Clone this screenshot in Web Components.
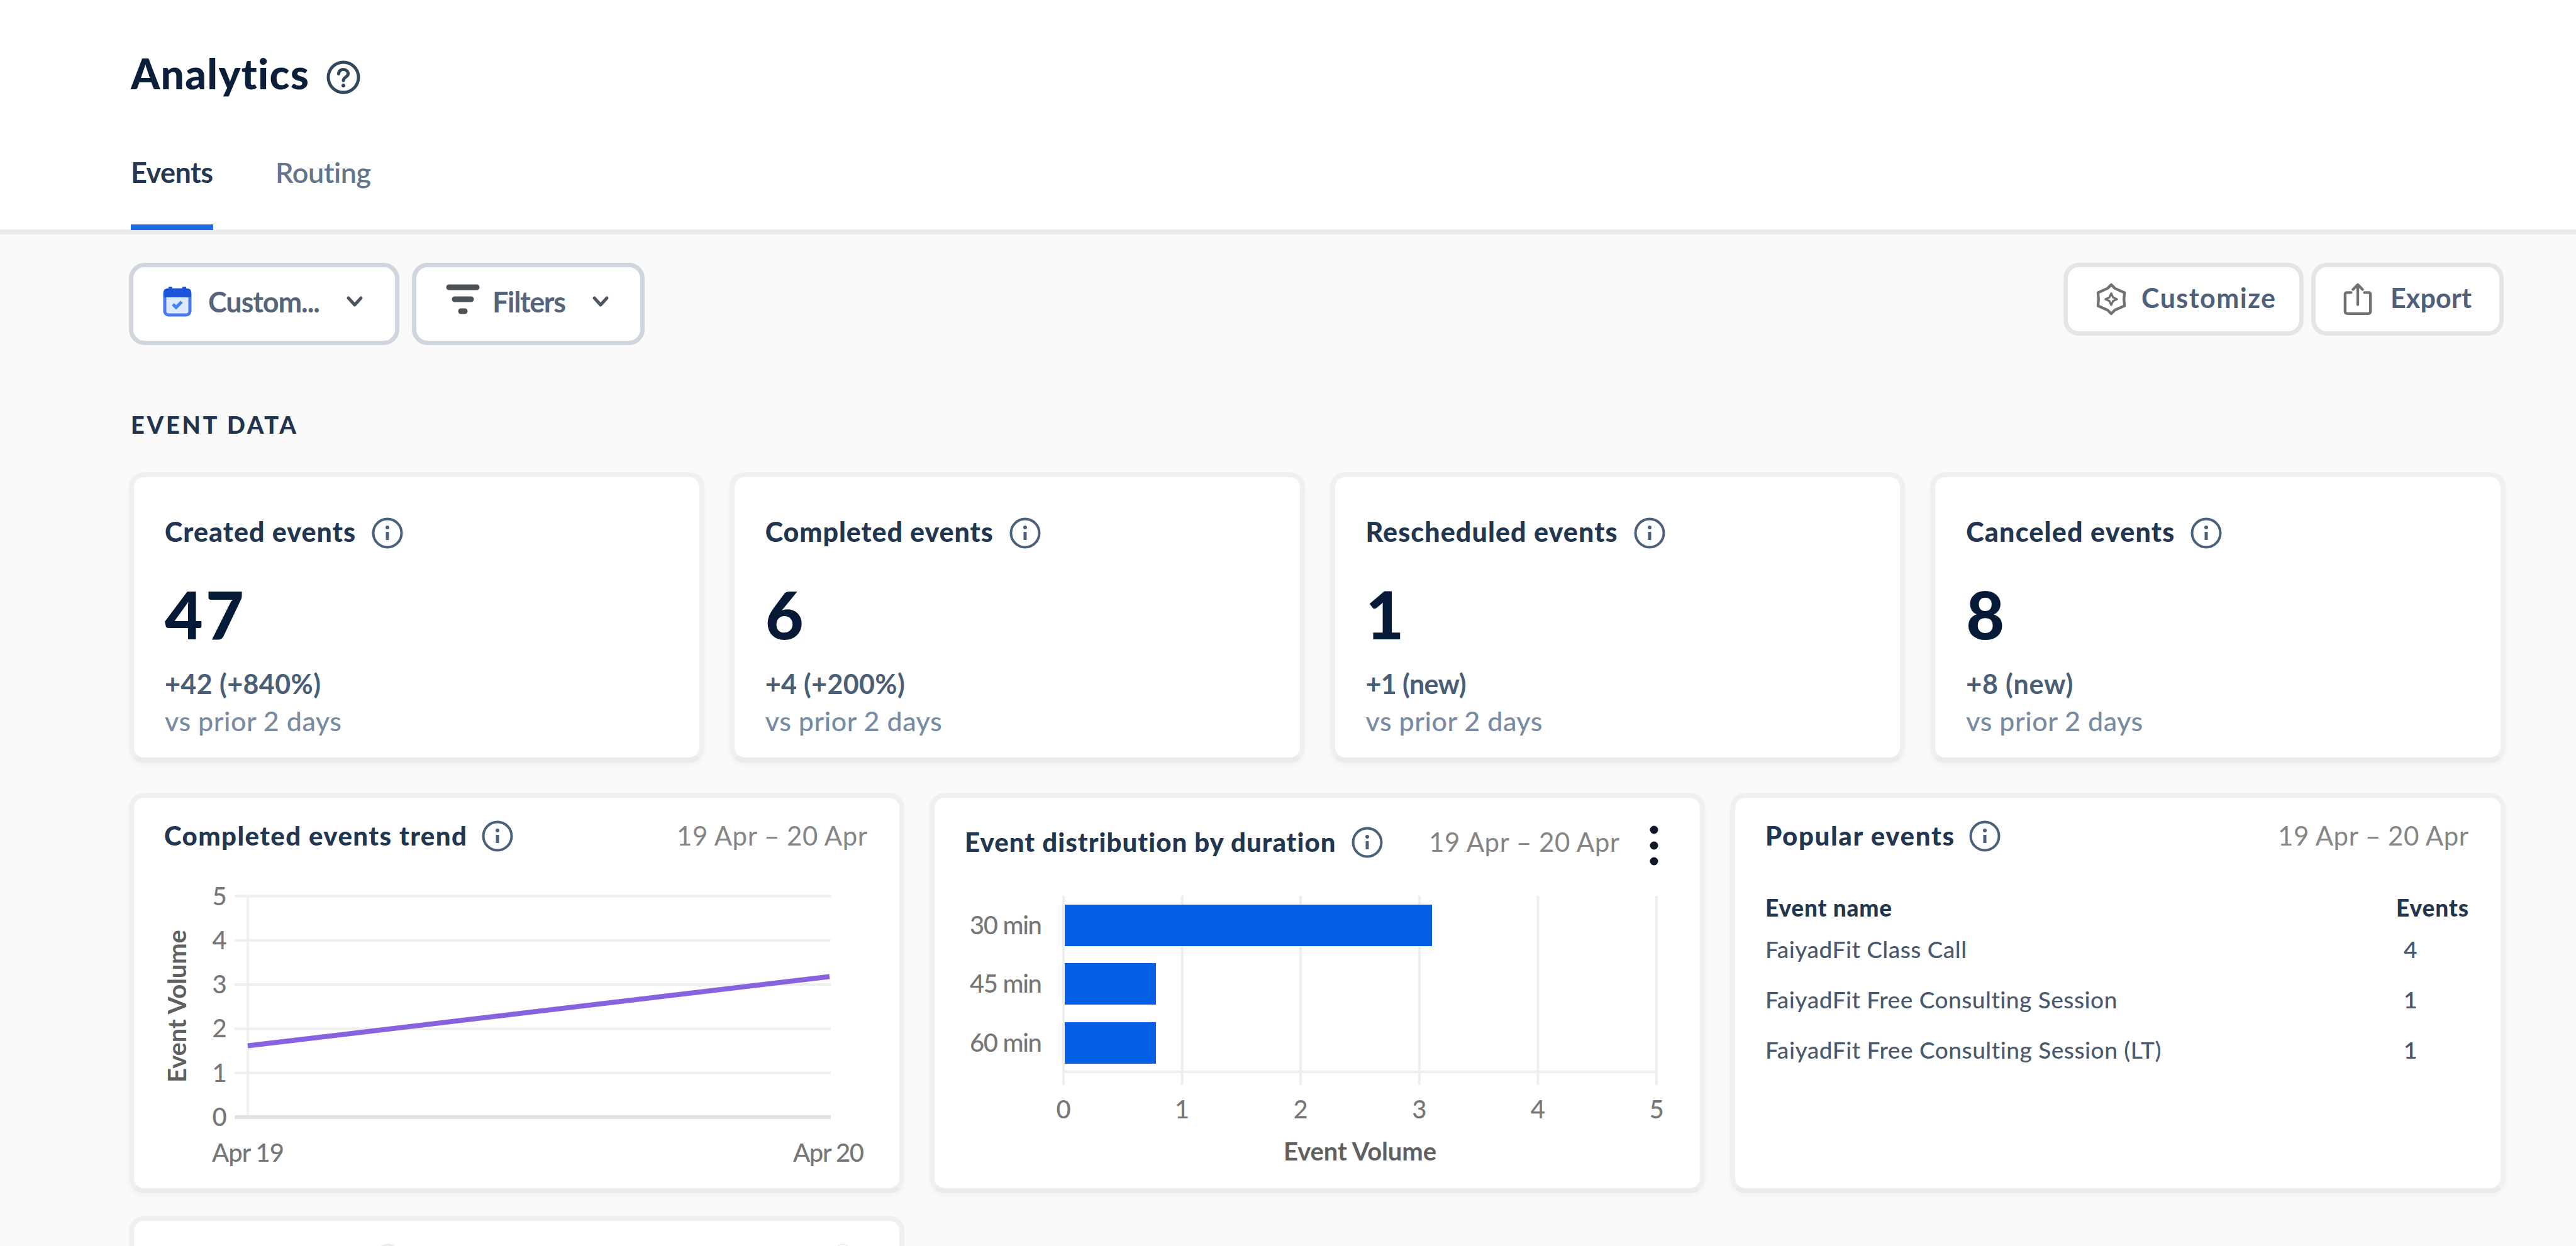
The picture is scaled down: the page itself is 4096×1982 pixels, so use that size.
<!DOCTYPE html>
<html lang="en">
<head>
<meta charset="utf-8">
<title>Analytics</title>
<style>
    html, body { margin: 0; height: 100%; overflow: hidden; }
    body { background: #fafafa; color: #0b2440; font-family: Lato, "Open Sans", sans-serif; }
</style>
</head>
<body>
<analytics-page></analytics-page>

<script>
const ICONS = {
    help: `<svg viewBox="0 0 54 54" fill="none" stroke="#33475b" stroke-width="5"><circle cx="27" cy="27" r="24"/><path d="M19.500 21.500c0-9.500 15-9 15 0 0 5-7.500 5-7.500 10.500" stroke-linecap="round"/><circle cx="27" cy="40" r="3" fill="#33475b" stroke="none"/></svg>`,
    info: `<svg viewBox="0 0 50 50" fill="none" stroke="#4b6079" stroke-width="4"><circle cx="25" cy="25" r="22.500"/><path d="M25 23v13" stroke-width="5"/><circle cx="25" cy="16" r="3" fill="#4b6079" stroke="none"/></svg>`,
    calendar: `<svg viewBox="0 0 46 48"><rect x="3" y="5" width="40" height="40" rx="6" fill="#dcebff" stroke="#4a78ee" stroke-width="5"/><path d="M1 17V9q0-6 6-6h2V0h6v3h16V0h6v3h2q6 0 6 6v8z" fill="#1d55d8"/><path d="M16 28l5 5 9-9" fill="none" stroke="#3f86f0" stroke-width="5"/></svg>`,
    filter: `<svg viewBox="0 0 54 54" stroke="#4d5258" stroke-width="9" stroke-linecap="round"><path d="M5 6h44M14 25h26M24 44h6"/></svg>`,
    chevron: `<svg viewBox="0 0 28 20" fill="none" stroke="#4d5560" stroke-width="5" stroke-linecap="round" stroke-linejoin="round"><path d="M4 4l10 11L24 4"/></svg>`,
    gear: `<svg viewBox="0 0 52 54" fill="none" stroke="#6f7376" stroke-width="4.500" stroke-linejoin="round"><path d="M26 3l6 6 11 5 5 2-1 11 1 11-5 2-11 5-6 6-6-6-11-5-5-2 1-11-1-11 5-2 11-5z"/><path d="M26 17.500l3 6.500 6.500 3-6.500 3-3 6.500-3-6.500-6.500-3 6.500-3z" stroke-width="3.500"/></svg>`,
    share: `<svg viewBox="0 0 48 54" fill="none" stroke="#6f7270" stroke-width="4.500" stroke-linecap="round" stroke-linejoin="round"><path d="M13 16H6q-3 0-3 3v28q0 4 4 4h34q4 0 4-4V19q0-3-3-3h-7M24 36V4M16 11l8-8 8 8"/></svg>`,
    more: `<svg viewBox="0 0 14 64" fill="#101828"><circle cx="7" cy="7" r="6.500"/><circle cx="7" cy="32" r="6.500"/><circle cx="7" cy="57" r="6.500"/></svg>`
};

// One line of text, tracked so that it fills the given width
class FitText extends HTMLElement {
    constructor() {
        super();
        this.attachShadow({ mode: 'open' });
    }

    connectedCallback() {
        const width = Number(this.getAttribute('w'));
        this.shadowRoot.innerHTML = `
            <style>
                :host { display: block; flex: none; width: ${width}px; white-space: nowrap; }
                span { display: inline-block; }
            </style>
            <span></span>
        `;
        const span = this.shadowRoot.querySelector('span');
        span.textContent = this.getAttribute('text');
        const count = span.textContent.length;
        if (count > 1) {
            const natural = span.getBoundingClientRect().width;
            span.style.letterSpacing = (width - natural) / (count - 1) + 'px';
        }
    }
}
customElements.define('fit-text', FitText);

class UiIcon extends HTMLElement {
    constructor() {
        super();
        this.attachShadow({ mode: 'open' });
    }

    connectedCallback() {
        this.shadowRoot.innerHTML = `
            <style>
                :host { display: block; flex: none; width: ${this.getAttribute('size')}px; }
                svg { display: block; width: 100%; overflow: visible; }
            </style>
            ${ICONS[this.getAttribute('name')]}
        `;
    }
}
customElements.define('ui-icon', UiIcon);

class ToolButton extends HTMLElement {
    constructor() {
        super();
        this.attachShadow({ mode: 'open' });
        this.shadowRoot.innerHTML = `
            <style>
                :host {
                    display: flex; align-items: center; box-sizing: border-box; flex: none;
                    height: 131px; padding: 0 0 7px 47px;
                    border: 7px solid #d1d6de; border-radius: 25px; background: #fff;
                    font-size: 45px; line-height: 60px; font-weight: 700; color: #56657a;
                }
                :host([kind="action"]) { height: 116px; padding: 0 0 0 44px; border-color: #e5e5e5; font-size: 43px; color: #505f7a; }
            </style>
            <slot></slot>
        `;
    }
}
customElements.define('tool-button', ToolButton);

class PageHeader extends HTMLElement {
    constructor() {
        super();
        this.attachShadow({ mode: 'open' });
        this.shadowRoot.innerHTML = `
            <style>
                :host { display: block; box-sizing: border-box; height: 373px; padding: 77px 0 0 208px; background: #fff; border-bottom: 8px solid #e9ebee; }
                .title { display: flex; align-items: center; gap: 27px; font-size: 66px; line-height: 80px; font-weight: 900; color: #0b1f3a; }
                ui-icon { margin-top: 12px; }
                nav { display: flex; gap: 99px; margin-top: 87px; font-size: 45px; line-height: 60px; font-weight: 600; color: #64748a; }
                .tab { padding-bottom: 53px; }
                .active { border-bottom: 9px solid #1f6be6; color: #263850; font-weight: 700; }
            </style>
            <div class="title"><fit-text text="Analytics" w="284"></fit-text><ui-icon name="help" size="54"></ui-icon></div>
            <nav>
                <div class="tab active"><fit-text text="Events" w="131"></fit-text></div>
                <div class="tab"><fit-text text="Routing" w="153"></fit-text></div>
            </nav>
        `;
    }
}
customElements.define('page-header', PageHeader);

class PanelCard extends HTMLElement {
    constructor() {
        super();
        this.attachShadow({ mode: 'open' });
        this.shadowRoot.innerHTML = `
            <style>
                :host {
                    display: block; box-sizing: border-box; overflow: hidden; background: #fff;
                    border: 8px solid #f0f0f0; border-bottom-color: #ebebeb; border-radius: 24px;
                    box-shadow: 0 5px 8px rgba(0, 0, 0, .03);
                }
            </style>
            <slot></slot>
        `;
    }
}
customElements.define('panel-card', PanelCard);

class StatCard extends HTMLElement {
    constructor() {
        super();
        this.attachShadow({ mode: 'open' });
    }

    connectedCallback() {
        const get = (name) => this.getAttribute(name);
        this.shadowRoot.innerHTML = `
            <style>
                :host { display: block; }
                panel-card { height: 462px; padding: 57px 0 0 49px; }
                .head { display: flex; align-items: center; gap: 26px; font-size: 43px; line-height: 60px; font-weight: 900; color: #22364f; }
                ui-icon { margin-top: 3px; }
                .value { margin-top: 45px; font-size: 105px; line-height: 110px; font-weight: 900; color: #051a36; }
                .delta { margin-top: 28px; font-size: 43px; line-height: 58px; font-weight: 700; color: #4a5e76; }
                .prior { margin-top: 1px; font-size: 43px; line-height: 58px; font-weight: 500; color: #788ba2; }
            </style>
            <panel-card>
                <div class="head"><fit-text text="${get('heading')}" w="${get('heading-w')}"></fit-text><ui-icon name="info" size="50"></ui-icon></div>
                <div class="value"><fit-text text="${get('value')}" w="${get('value-w')}"></fit-text></div>
                <div class="delta"><fit-text text="${get('delta')}" w="${get('delta-w')}"></fit-text></div>
                <div class="prior"><fit-text text="vs prior 2 days" w="281"></fit-text></div>
            </panel-card>
        `;
    }
}
customElements.define('stat-card', StatCard);

class ChartCard extends HTMLElement {
    constructor() {
        super();
        this.attachShadow({ mode: 'open' });
    }

    connectedCallback() {
        const more = this.hasAttribute('menu');
        this.shadowRoot.innerHTML = `
            <style>
                :host { display: block; }
                panel-card { height: 637px; }
                .head { display: flex; align-items: center; padding: ${more ? '40px 66px' : '30px 51px'} 0 48px; font-size: 42px; line-height: 60px; font-weight: 900; color: #22364f; height: 60px; }
                .head ui-icon { margin: 1px 0 0 24px; }
                .date { margin-left: auto; font-weight: 400; color: #858585; }
                .head .more { margin: 12px 0 0 48px; }
            </style>
            <panel-card>
                <div class="head">
                    <fit-text text="${this.getAttribute('heading')}" w="${this.getAttribute('heading-w')}"></fit-text>
                    <ui-icon name="info" size="50"></ui-icon>
                    <fit-text class="date" text="19 Apr – 20 Apr" w="303"></fit-text>
                    ${more ? '<ui-icon class="more" name="more" size="14"></ui-icon>' : ''}
                </div>
                <slot></slot>
            </panel-card>
        `;
    }
}
customElements.define('chart-card', ChartCard);

class TrendChart extends HTMLElement {
    constructor() {
        super();
        this.attachShadow({ mode: 'open' });
        const step = 70.3;
        const base = 418;
        let grid = '';
        for (let i = 0; i <= 5; i++) {
            const y = base - i * step;
            grid += `<path d="M160 ${y}H1108" stroke="${i ? '#efefef' : '#e2e2e2'}" stroke-width="${i ? 4 : 6}"/>`;
            grid += `<text x="136" y="${y + 14}" text-anchor="middle">${i}</text>`;
        }
        this.shadowRoot.innerHTML = `
            <style>
                :host { display: block; height: 530px; }
                svg { display: block; }
                text { font-size: 40px; fill: #777; font-weight: 500; }
                .axis { fill: #606060; font-weight: 700; }
            </style>
            <svg width="1217" height="530" viewBox="0 0 1217 530">
                <path d="M181 66V418" stroke="#f1f1f1" stroke-width="4"/>
                ${grid}
                <path d="M181 304.500L1106 194.500" stroke="#8763e0" stroke-width="8"/>
                <text class="axis" transform="translate(83 363) rotate(-90)" textLength="243">Event Volume</text>
                <text x="124" y="489" textLength="115">Apr 19</text>
                <text x="1048" y="489" textLength="113">Apr 20</text>
            </svg>
        `;
    }
}
customElements.define('trend-chart', TrendChart);

class DurationChart extends HTMLElement {
    constructor() {
        super();
        this.attachShadow({ mode: 'open' });
        let grid = '';
        for (let i = 0; i <= 5; i++) {
            const x = 205 + i * 188.600;
            grid += `<path d="M${x} 56V357" stroke="#eeeeee" stroke-width="4"/>`;
            grid += `<text x="${x}" y="410" text-anchor="middle">${i}</text>`;
        }
        const bars = [
            { label: '30 min', y: 70, width: 584 },
            { label: '45 min', y: 163, width: 145 },
            { label: '60 min', y: 257, width: 145 }
        ].map((bar) => `
            <rect x="207" y="${bar.y}" width="${bar.width}" height="66" fill="#0560e6"/>
            <text x="56" y="${bar.y + 47}" textLength="115">${bar.label}</text>
        `).join('');
        this.shadowRoot.innerHTML = `
            <style>
                :host { display: block; height: 520px; }
                svg { display: block; }
                text { font-size: 40px; fill: #777; font-weight: 500; }
                .axis { fill: #606060; font-weight: 700; }
            </style>
            <svg width="1217" height="520" viewBox="0 0 1217 520">
                <path d="M205 336H1150" stroke="#efefef" stroke-width="4"/>
                ${grid}
                ${bars}
                <text class="axis" x="555" y="477" textLength="243">Event Volume</text>
            </svg>
        `;
    }
}
customElements.define('duration-chart', DurationChart);

class EventTable extends HTMLElement {
    constructor() {
        super();
        this.attachShadow({ mode: 'open' });
        const rows = [
            ['FaiyadFit Class Call', 320, 4],
            ['FaiyadFit Free Consulting Session', 560, 1],
            ['FaiyadFit Free Consulting Session (LT)', 630, 1]
        ].map(([name, width, count]) => `<div class="row"><fit-text text="${name}" w="${width}"></fit-text><span>${count}</span></div>`).join('');
        this.shadowRoot.innerHTML = `
            <style>
                :host { display: block; padding: 61px 51px 0 48px; font-size: 37px; font-weight: 500; color: #4a596d; }
                .row { display: flex; justify-content: space-between; line-height: 80px; }
                .head { line-height: 48px; margin-bottom: 2px; font-weight: 900; color: #22364f; }
                span { width: 103px; font-weight: 600; }
            </style>
            <div class="row head"><fit-text text="Event name" w="201"></fit-text><fit-text text="Events" w="115"></fit-text></div>
            ${rows}
        `;
    }
}
customElements.define('event-table', EventTable);

class AnalyticsPage extends HTMLElement {
    constructor() {
        super();
        this.attachShadow({ mode: 'open' });
        this.shadowRoot.innerHTML = `
            <style>
                :host { display: block; }
                main { padding: 45px 112px 0 205px; }
                .toolbar { display: flex; align-items: flex-start; height: 131px; margin-right: 3px; }
                .spacer { flex: 1; }
                .chev { margin-left: 41px; }
                .text { margin-bottom: 5px; }
                h2 { margin: 101px 0 51px 3px; font-size: 38px; line-height: 50px; font-weight: 900; color: #22344d; }
                .stats { display: grid; grid-template-columns: repeat(4, 1fr); gap: 40px; }
                .charts { display: grid; grid-template-columns: repeat(3, 1fr); gap: 36px 40px; margin-top: 48px; }
                /* only the top edge of the next row is in view */
                .next { height: 48px; padding: 36px 80px 0 384px; border-bottom: 0; border-radius: 24px 24px 0 0; box-shadow: none; }
                .next div { display: flex; justify-content: space-between; height: 4px; overflow: hidden; opacity: .12; }
            </style>
            <page-header></page-header>
            <main>
                <div class="toolbar">
                    <tool-button style="width: 430px">
                        <ui-icon name="calendar" size="46"></ui-icon>
                        <fit-text text="Custom..." w="178" style="margin-left: 26px"></fit-text>
                        <ui-icon class="chev" name="chevron" size="28"></ui-icon>
                    </tool-button>
                    <tool-button style="width: 370px; margin-left: 20px">
                        <ui-icon name="filter" size="54" style="margin-bottom: 5px"></ui-icon>
                        <fit-text text="Filters" w="117" style="margin-left: 20px"></fit-text>
                        <ui-icon class="chev" name="chevron" size="28"></ui-icon>
                    </tool-button>
                    <div class="spacer"></div>
                    <tool-button kind="action" style="width: 382px">
                        <ui-icon name="gear" size="50"></ui-icon>
                        <fit-text class="text" text="Customize" w="213" style="margin-left: 23px"></fit-text>
                    </tool-button>
                    <tool-button kind="action" style="width: 306px; margin-left: 12px">
                        <ui-icon name="share" size="46"></ui-icon>
                        <fit-text class="text" text="Export" w="129" style="margin-left: 29px"></fit-text>
                    </tool-button>
                </div>
                <h2><fit-text text="EVENT DATA" w="263"></fit-text></h2>
                <div class="stats">
                    <stat-card heading="Created events" heading-w="303" value="47" value-w="126" delta="+42 (+840%)" delta-w="248"></stat-card>
                    <stat-card heading="Completed events" heading-w="362" value="6" value-w="64" delta="+4 (+200%)" delta-w="222"></stat-card>
                    <stat-card heading="Rescheduled events" heading-w="400" value="1" value-w="64" delta="+1 (new)" delta-w="160"></stat-card>
                    <stat-card heading="Canceled events" heading-w="331" value="8" value-w="64" delta="+8 (new)" delta-w="170"></stat-card>
                </div>
                <div class="charts">
                    <chart-card heading="Completed events trend" heading-w="481"><trend-chart></trend-chart></chart-card>
                    <chart-card heading="Event distribution by duration" heading-w="591" menu><duration-chart></duration-chart></chart-card>
                    <chart-card heading="Popular events" heading-w="300"><event-table></event-table></chart-card>
                    <panel-card class="next"><div><ui-icon name="info" size="40"></ui-icon><ui-icon name="info" size="20"></ui-icon></div></panel-card>
                </div>
            </main>
        `;
    }
}
customElements.define('analytics-page', AnalyticsPage);
</script>
</body>
</html>
